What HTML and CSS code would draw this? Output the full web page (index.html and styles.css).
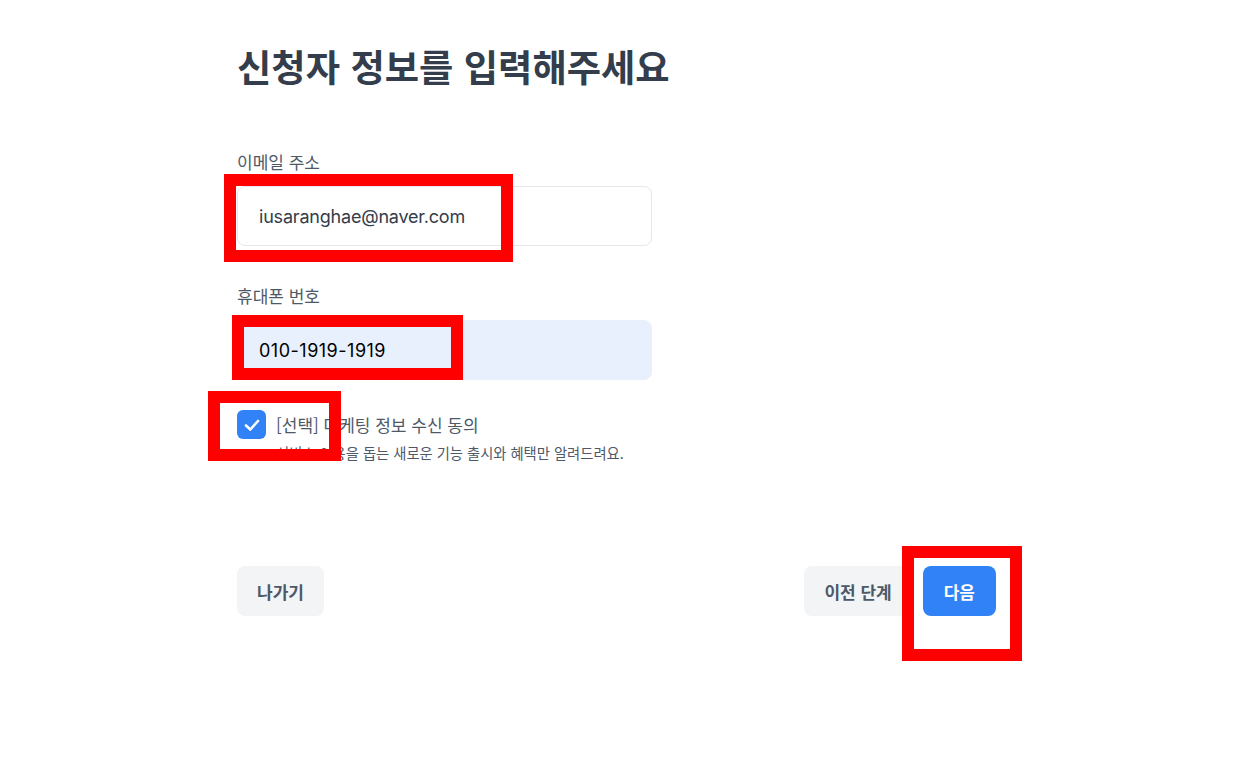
FILE: index.html
```html
<!DOCTYPE html>
<html lang="ko">
<head>
<meta charset="utf-8">
<title>신청자 정보</title>
<link rel="stylesheet" href="styles.css">
</head>
<body>
<main class="page">
  <h1 class="title">신청자 정보를 입력해주세요</h1>
  <form class="form">
    <div class="field">
      <label class="label">이메일 주소</label>
      <div class="input input--email">iusaranghae@naver.com</div>
    </div>
    <div class="field">
      <label class="label">휴대폰 번호</label>
      <div class="input input--filled">010-1919-1919</div>
    </div>
    <div class="consent">
      <span class="checkbox">
        <svg width="20" height="20" viewBox="0 0 20 20"><polyline points="4,10.5 8.3,14.5 16,6" fill="none" stroke="#fff" stroke-width="2.6" stroke-linecap="round" stroke-linejoin="round"/></svg>
      </span>
      <div class="consent-text">
        <div class="consent-title">[선택] 마케팅 정보 수신 동의</div>
        <div class="consent-sub">서비스 이용을 돕는 새로운 기능 출시와 혜택만 알려드려요.</div>
      </div>
    </div>
  </form>
  <div class="actions">
    <button class="btn btn--gray" type="button">나가기</button>
    <div class="actions-right">
      <button class="btn btn--gray" type="button">이전 단계</button>
      <button class="btn btn--blue" type="button">다음</button>
    </div>
  </div>
</main>
<div class="mark mark--email"></div>
<div class="mark mark--phone"></div>
<div class="mark mark--check"></div>
<div class="mark mark--next"></div>
</body>
</html>
```
FILE: styles.css
```css
* { box-sizing: border-box; }
html, body { margin: 0; padding: 0; background: #fff; }
body {
  font-family: "Noto Sans CJK KR", "Noto Sans", sans-serif;
  color: #333d4b;
  position: relative;
  min-height: 777px;
}
.page {
  width: 759px;
  margin-left: 237px;
  padding-top: 40px;
}
.title {
  margin: 0;
  font-size: 37.3px;
  line-height: 52px;
  font-weight: 700;
  color: #333d4b;
}
.form {
  width: 415px;
  margin-top: 58px;
}
.field { margin-bottom: 38px; }
.field:nth-child(2) { margin-bottom: 30px; }
.label {
  display: block;
  font-size: 17px;
  line-height: 24px;
  color: #4e5968;
  margin-bottom: 12px;
}
.input {
  height: 60px;
  border: 1px solid #e5e8eb;
  border-radius: 8px;
  padding: 0 21px;
  display: flex;
  align-items: center;
  font-family: Inter, "Noto Sans", sans-serif;
  font-size: 18px;
  color: #333d4b;
  background: #fff;
}
.input--email { letter-spacing: -0.2px; }
.input--filled {
  border-color: #e8f0fe;
  background: #e8f0fe;
  color: #000;
  letter-spacing: 0.5px;
}
.consent {
  display: flex;
  gap: 10px;
  align-items: flex-start;
}
.checkbox {
  width: 29px;
  height: 29px;
  border-radius: 6px;
  background: #3182f6;
  display: flex;
  align-items: center;
  justify-content: center;
  flex: none;
}
.consent-text { padding-top: 2px; }
.consent-title {
  font-size: 17px;
  line-height: 26px;
  color: #4e5968;
}
.consent-sub {
  margin-top: 5px;
  font-size: 14.3px;
  line-height: 20px;
  color: #4e5968;
}
.actions {
  margin-top: 103px;
  display: flex;
  justify-content: space-between;
  align-items: center;
}
.actions-right { display: flex; gap: 11px; }
.btn {
  height: 50px;
  padding: 0 20px;
  border: 0;
  border-radius: 8px;
  font-family: "Noto Sans CJK KR", sans-serif;
  font-size: 17px;
  font-weight: 700;
  cursor: pointer;
}
.btn--gray { background: #f2f4f6; color: #4e5968; }
.btn--blue { background: #3182f6; color: #fff; padding: 0 21px; }
.mark {
  position: absolute;
  border: 12px solid #ff0000;
  pointer-events: none;
}
.mark--email { left: 224px; top: 174px; width: 289px; height: 88px; }
.mark--phone { left: 232px; top: 315px; width: 231px; height: 65px; }
.mark--check { left: 208px; top: 391px; width: 133px; height: 70px; }
.mark--next { left: 902px; top: 546px; width: 120px; height: 115px; }
```
